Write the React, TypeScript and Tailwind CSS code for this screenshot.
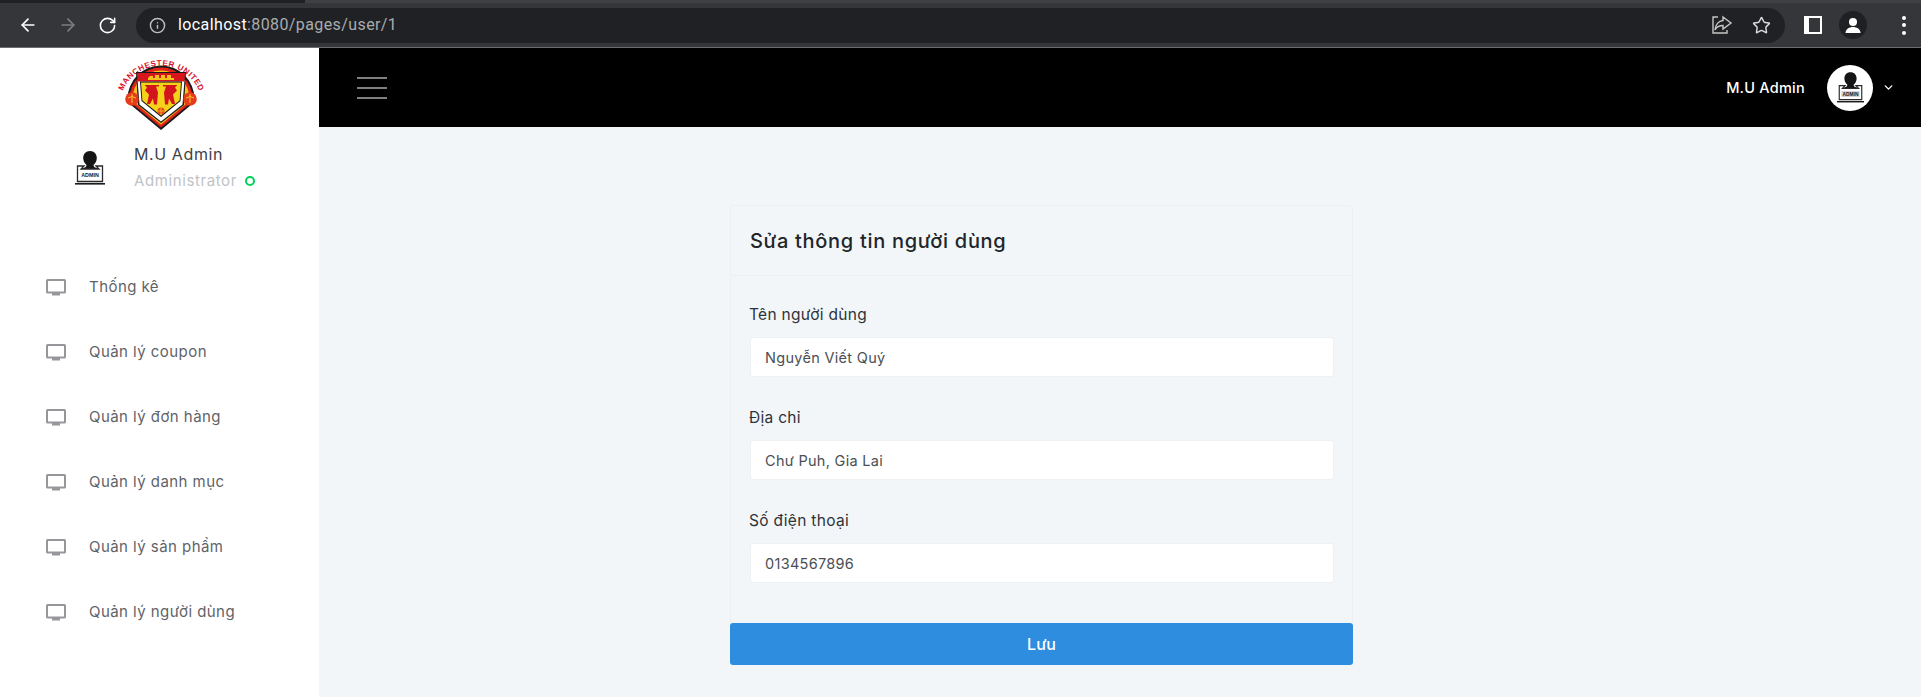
import React from "react";
import { ArrowLeft, ArrowRight, RotateCw, Info, Star, ChevronDown } from "lucide-react";

const font = { fontFamily: "Inter, 'Noto Sans', sans-serif" };

function Logo() {
  return (
    <svg width="88" height="74" viewBox="0 0 88 74" className="block overflow-visible">
      <defs>
        <path id="arc" d="M5.8 34 A41.5 41.5 0 0 1 82.2 34" fill="none" />
      </defs>
      <text fill="#d8152a" fontSize="8" fontWeight="700" fontFamily="'Liberation Sans', sans-serif">
        <textPath href="#arc" textLength="97" lengthAdjust="spacing">MANCHESTER UNITED</textPath>
      </text>
      <path d="M10.5 42 A33.5 33.5 0 0 1 77.5 42 L74 48 L44 73 L14 48 Z" fill="#1d1a1a" />
      <path d="M12.5 42 A31.5 31.5 0 0 1 75.5 42 L72.5 47 L44 70.5 L15.5 47 Z" fill="#e2241a" />
      <path d="M15.5 42 A28.5 28.5 0 0 1 72.5 42 L70 46 L44 67.5 L18 46 Z" fill="#f3c21b" />
      <path d="M19 15 H69 L67 48 L44 66 L21 48 Z" fill="#1a1a1a" />
      <path d="M20.5 23 H67.5 L65.5 47.5 L44 64.5 L22.5 47.5 Z" fill="#ffffff" />
      <path d="M20 16 H68 L67.6 24.5 H20.4 Z" fill="#d8151c" />
      <path d="M31 23 h26 v-2 h-3 v-3 h-4 v3 h-2 v-3 h-4 v3 h-2 v-3 h-4 v3 h-2 v-2 h-3 l-2 2 z" fill="#f3c21b" />
      <path d="M23 24.5 H65 L63.5 44 L44 60 L24.5 44 Z" fill="#111" />
      <path d="M24 25.5 H64 L62.6 43.5 L44 58.5 L25.4 43.5 Z" fill="#f5d21a" />
      <path d="M28 28 h14 v1.5 h-3 l2 6 l-1 12 h-3 l-1 -6 l-3 5.5 h-3 l2 -9.5 l-4 -4 l2 -3 l-2 -2 z" fill="#d3141c" />
      <path d="M60 28 h-14 v1.5 h3 l-2 6 l1 12 h3 l1 -6 l3 5.5 h3 l-2 -9.5 l4 -4 l-2 -3 l2 -2 z" fill="#d3141c" />
      <circle cx="44" cy="54" r="3.6" fill="#e8461c" />
      <path d="M44 50.5 v7 M40.5 54 h7" stroke="#f5d21a" strokeWidth="0.7" />
      <circle cx="15" cy="42" r="6.8" fill="#e83b1c" />
      <circle cx="73" cy="42" r="6.8" fill="#e83b1c" />
      <path d="M11 41 q4 -3 8 0 M15 37 v9 M69 41 q4 -3 8 0 M73 37 v9" stroke="#f7c92b" strokeWidth="1" fill="none" />
    </svg>
  );
}

function AdminIcon({ size = 30, height = 34, shaded = false }: { size?: number; height?: number; shaded?: boolean }) {
  return (
    <svg width={size} height={height} viewBox="0 0 30 34" className="block">
      <path d="M15 0 c4.2 0 6.8 3 6.8 7 c0 3 -1.3 5 -3.3 7 c0 2 1.5 2.5 4.5 3.5 l2 1.5 H5 l2 -1.5 c3 -1 4.5 -1.5 4.5 -3.5 c-2 -2 -3.3 -4 -3.3 -7 c0 -4 2.6 -7 6.8 -7 z" fill="#151515" />
      <path d="M2.5 15 H9 L6 18 H24 L21 15 H27.5 V30.5 H2.5 Z" fill="#fff" stroke="#2a2a2a" strokeWidth="1.3" />
      {shaded && <rect x="5" y="21" width="20" height="6.5" fill="#8a8a8a" opacity="0.4" />}
      <text x="15" y="26" textAnchor="middle" fontSize="5.4" fontWeight="700" fontFamily="'Liberation Sans', sans-serif" fill="#222">ADMIN</text>
      <rect x="0" y="32" width="30" height="1.6" fill="#1c1c1c" />
    </svg>
  );
}

function Monitor() {
  return (
    <svg width="20" height="17" viewBox="0 0 20 17" className="block shrink-0">
      <rect x="1" y="1" width="18" height="12.5" fill="none" stroke="#97979b" strokeWidth="2" rx="0.5" />
      <rect x="6" y="14" width="8" height="2.5" fill="#97979b" />
    </svg>
  );
}

function BrowserBar() {
  return (
    <div className="h-12 shrink-0 flex flex-col bg-[#35363a] border-b border-[#6b6c70]">
      <div className="h-[3px] flex">
        <div className="w-[305px] bg-[#202124]" />
        <div className="flex-1 bg-[#3f4043]" />
      </div>
      <div className="flex-1 flex items-center pl-[18px] pr-[15px]">
        <ArrowLeft size={20} strokeWidth={2} className="text-white" />
        <ArrowRight size={20} strokeWidth={2} className="text-[#7d7e81] ml-[20px]" />
        <RotateCw size={19} strokeWidth={2} className="text-white ml-[20px]" />
        <div className="ml-[19px] h-[35px] flex-1 rounded-full bg-[#202124] flex items-center pl-[13px] pr-[14px]">
          <Info size={17} strokeWidth={2} className="text-[#bdc1c6]" />
          <div className="ml-[12px] text-[16px] tracking-[0.4px] text-[#a8abaf]" style={{ fontFamily: "Roboto, sans-serif" }}>
            <span className="text-white">localhost</span>:8080/pages/user/1
          </div>
          <div className="flex-1" />
          <svg width="22" height="20" viewBox="0 0 22 20" fill="none" stroke="#c4c7c5" strokeWidth="1.4" className="block">
            <path d="M7 2 H2 V18 H16 V15" />
            <path d="M12 2 L20 8 L12 14 V10.5 C8 10.5 5.5 12 4 15 C4.5 10 7.5 6 12 5.5 Z" />
          </svg>
          <Star size={19} strokeWidth={1.8} className="text-[#dadce0] ml-[19px]" />
        </div>
        <div className="ml-[19px] w-[18px] h-[18px] bg-white flex justify-end">
          <div className="w-[11px] h-[14px] mt-[2px] mr-[2px] bg-[#35363a]" />
        </div>
        <div className="ml-[17px] w-7 h-7 rounded-full bg-[#1f2023] flex items-center justify-center">
          <svg width="18" height="18" viewBox="0 0 18 18" fill="#fff">
            <circle cx="9" cy="6" r="4" />
            <path d="M1.5 17 c0 -4 4 -6 7.5 -6 s7.5 2 7.5 6 z" />
          </svg>
        </div>
        <div className="ml-[35px] flex flex-col gap-[3.5px]">
          <span className="block w-[4px] h-[4px] rounded-full bg-white" />
          <span className="block w-[4px] h-[4px] rounded-full bg-white" />
          <span className="block w-[4px] h-[4px] rounded-full bg-white" />
        </div>
      </div>
    </div>
  );
}

const navItems = ["Thống kê", "Quản lý coupon", "Quản lý đơn hàng", "Quản lý danh mục", "Quản lý sản phẩm", "Quản lý người dùng"];

function Sidebar() {
  return (
    <aside className="w-[319px] shrink-0 bg-white flex flex-col">
      <div className="flex justify-center pt-[9px]">
        <div className="mr-[-3px]"><Logo /></div>
      </div>
      <div className="flex items-center pl-[75px] mt-[11px]">
        <AdminIcon />
        <div className="ml-[29px] flex flex-col">
          <div className="text-[16px] leading-[24px] font-normal tracking-[0.6px] text-[#3f4247]">M.U Admin</div>
          <div className="mt-[3px] flex items-center">
            <span className="text-[15px] leading-[24px] tracking-[0.6px] text-[#c0c3c7]">Administrator</span>
            <span className="ml-[8px] w-[10px] h-[10px] rounded-full border-2 border-[#00d25b]" />
          </div>
        </div>
      </div>
      <nav className="mt-[62px] flex flex-col">
        {navItems.map((t) => (
          <div key={t} className="h-[65px] flex items-center pl-[46px]">
            <Monitor />
            <span className="ml-[23px] text-[15px] tracking-[0.45px] text-[#5f6368]">{t}</span>
          </div>
        ))}
      </nav>
    </aside>
  );
}

function Field({ label, value }: { label: string; value: string }) {
  return (
    <div className="flex flex-col">
      <label className="h-[24px] -ml-px leading-[24px] text-[15.5px] tracking-[0.3px] text-[#2f3338]">{label}</label>
      <input
        readOnly
        value={value}
        style={font}
        className="mt-[10px] h-[40px] w-[584px] rounded-[3px] bg-white border border-[#eef1f4] px-[14px] text-[14.5px] tracking-[0.3px] text-[#4b4f55] outline-none"
      />
    </div>
  );
}

export default function App() {
  return (
    <div className="w-[1921px] h-[697px] overflow-hidden flex flex-col bg-[#f2f6f9]" style={font}>
      <BrowserBar />
      <div className="flex-1 flex min-h-0">
        <Sidebar />
        <main className="flex-1 flex flex-col min-w-0">
          <header className="h-[79px] shrink-0 bg-black flex items-center pl-[38px] pr-[26px]">
            <div className="flex flex-col gap-[8px]">
              <span className="block w-[30px] h-[2px] bg-[#7f7f7f]" />
              <span className="block w-[30px] h-[2px] bg-[#7f7f7f]" />
              <span className="block w-[30px] h-[2px] bg-[#7f7f7f]" />
            </div>
            <div className="flex-1" />
            <span className="text-[14.5px] font-medium tracking-[0.25px] text-white">M.U Admin</span>
            <div className="ml-[22px] w-[46px] h-[46px] rounded-full bg-white flex items-center justify-center">
              <AdminIcon size={27} height={31} shaded />
            </div>
            <ChevronDown size={13} strokeWidth={2.5} className="ml-[9px] text-white" />
          </header>
          <div className="pl-[411px] pt-[78px]">
            <div className="w-[623px] rounded-t-[4px] border-x border-t border-[#ecf0f3]">
              <div className="h-[70px] flex items-center pl-[19px] border-b border-[#ecf0f3] text-[20px] font-medium tracking-[0.7px] text-[#212529]">
                Sửa thông tin người dùng
              </div>
              <div className="pl-[19px] pt-[27px] pb-[40px] flex flex-col gap-[29px]">
                <Field label="Tên người dùng" value="Nguyễn Viết Quý" />
                <Field label="Địa chỉ" value="Chư Puh, Gia Lai" />
                <Field label="Số điện thoại" value="0134567896" />
              </div>
            </div>
            <button className="w-[623px] h-[42px] rounded-[3px] bg-[#2f8de0] text-white text-[16px] font-medium">Lưu</button>
          </div>
        </main>
      </div>
    </div>
  );
}
